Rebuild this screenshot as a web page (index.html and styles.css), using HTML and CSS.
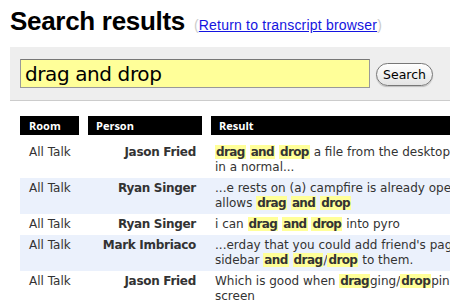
FILE: index.html
```html
<!DOCTYPE html>
<html lang="en">
<head>
    <meta charset="UTF-8">
    <title>Search results</title>
    <link rel="stylesheet" href="styles.css">
</head>
<body>
    <h1 class="title">Search results <span class="back">(<a href="#">Return to transcript browser</a>)</span></h1>

    <form class="search-bar">
        <input type="text" class="search-field" value="drag and drop">
        <button type="button" class="search-btn">Search</button>
    </form>

    <table class="results">
        <thead>
            <tr>
                <th class="col-room">Room</th>
                <th class="col-person">Person</th>
                <th class="col-result">Result</th>
            </tr>
        </thead>
        <tbody>
            <tr class="first">
                <td class="room">All Talk</td>
                <td class="person">Jason Fried</td>
                <td class="result"><b>drag</b> <b>and</b> <b>drop</b> a file from the desktop to the chat<br>in a normal...</td>
            </tr>
            <tr class="alt">
                <td class="room">All Talk</td>
                <td class="person">Ryan Singer</td>
                <td class="result">...e rests on (a) campfire is already open and<br>allows <b>drag</b> <b>and</b> <b>drop</b></td>
            </tr>
            <tr>
                <td class="room">All Talk</td>
                <td class="person">Ryan Singer</td>
                <td class="result">i can <b>drag</b> <b>and</b> <b>drop</b> into pyro</td>
            </tr>
            <tr class="alt">
                <td class="room">All Talk</td>
                <td class="person">Mark Imbriaco</td>
                <td class="result">...erday that you could add friend's pages to the<br>sidebar <b>and</b> <b>drag</b>/<b>drop</b> to them.</td>
            </tr>
            <tr>
                <td class="room">All Talk</td>
                <td class="person">Jason Fried</td>
                <td class="result">Which is good when <b>drag</b>ging/<b>drop</b>ping on the<br>screen</td>
            </tr>
        </tbody>
    </table>
</body>
</html>
```

FILE: styles.css
```css
/* Reset */
* {
    margin: 0;
    padding: 0;
    box-sizing: border-box;
}

body {
    font-family: 'DejaVu Sans', Verdana, sans-serif;
    font-size: 12px;
    color: #333;
    background: #fff;
    padding: 6px 0 0 10px;
    overflow: hidden;
}

/* Title */
.title {
    font-family: 'Liberation Sans', Arial, sans-serif;
    font-size: 26px;
    line-height: 30px;
    letter-spacing: -0.3px;
    color: #000;
    white-space: nowrap;
}

.back {
    font-size: 14px;
    line-height: 1;
    font-weight: normal;
    letter-spacing: 0.2px;
    color: #ccc;
    margin-left: 2px;
}

.back a {
    color: #1414e0;
}

/* Search bar */
.search-bar {
    display: flex;
    align-items: center;
    gap: 6px;
    width: 600px;
    margin-top: 11px;
    padding: 12px 10px;
    background: #eee;
    border-bottom: 1px solid #ccc;
}

.search-field {
    width: 350px;
    height: 29px;
    padding: 0 4px;
    font-family: 'DejaVu Sans', Verdana, sans-serif;
    font-size: 20px;
    letter-spacing: -0.4px;
    color: #000;
    background: #ffff99;
    border: 1px solid #999;
    border-top-color: #777;
    outline: none;
}

.search-btn {
    width: 57px;
    height: 23px;
    margin-top: 2px;
    font-family: 'DejaVu Sans', Verdana, sans-serif;
    font-size: 12.5px;
    color: #000;
    background: linear-gradient(#fff, #e4e4e4);
    border: 1px solid #777;
    border-radius: 12px;
    box-shadow: 0 1px 1px rgba(0, 0, 0, 0.2);
}

/* Results table */
.results {
    width: 640px;
    margin: 15px 0 0 10px;
    border-spacing: 0;
    table-layout: fixed;
}

.results th {
    height: 19px;
    padding: 0 8px;
    font-family: 'Open Sans', sans-serif;
    font-size: 11px;
    font-weight: bold;
    line-height: 19px;
    text-align: left;
    color: #fff;
    background: #000;
    border-right: 9px solid #fff;
}

.results th.col-room {
    width: 68px;
    padding-left: 9px;
}

.results th.col-person {
    width: 123px;
}

.results th.col-result {
    border-right: none;
}

.results td {
    padding: 3px 0;
    line-height: 15px;
    vertical-align: top;
}

.results tr.first td {
    padding-top: 10px;
}

.results tr.alt td {
    background: #ebf1fc;
}

.room {
    padding-left: 9px !important;
}

.person {
    padding-right: 15px !important;
    font-weight: bold;
    letter-spacing: -0.3px;
    text-align: right;
}

.result {
    padding-left: 4px !important;
    white-space: nowrap;
}

.result b {
    padding: 0 1px;
    letter-spacing: -0.6px;
    background: #ffff99;
}
```
